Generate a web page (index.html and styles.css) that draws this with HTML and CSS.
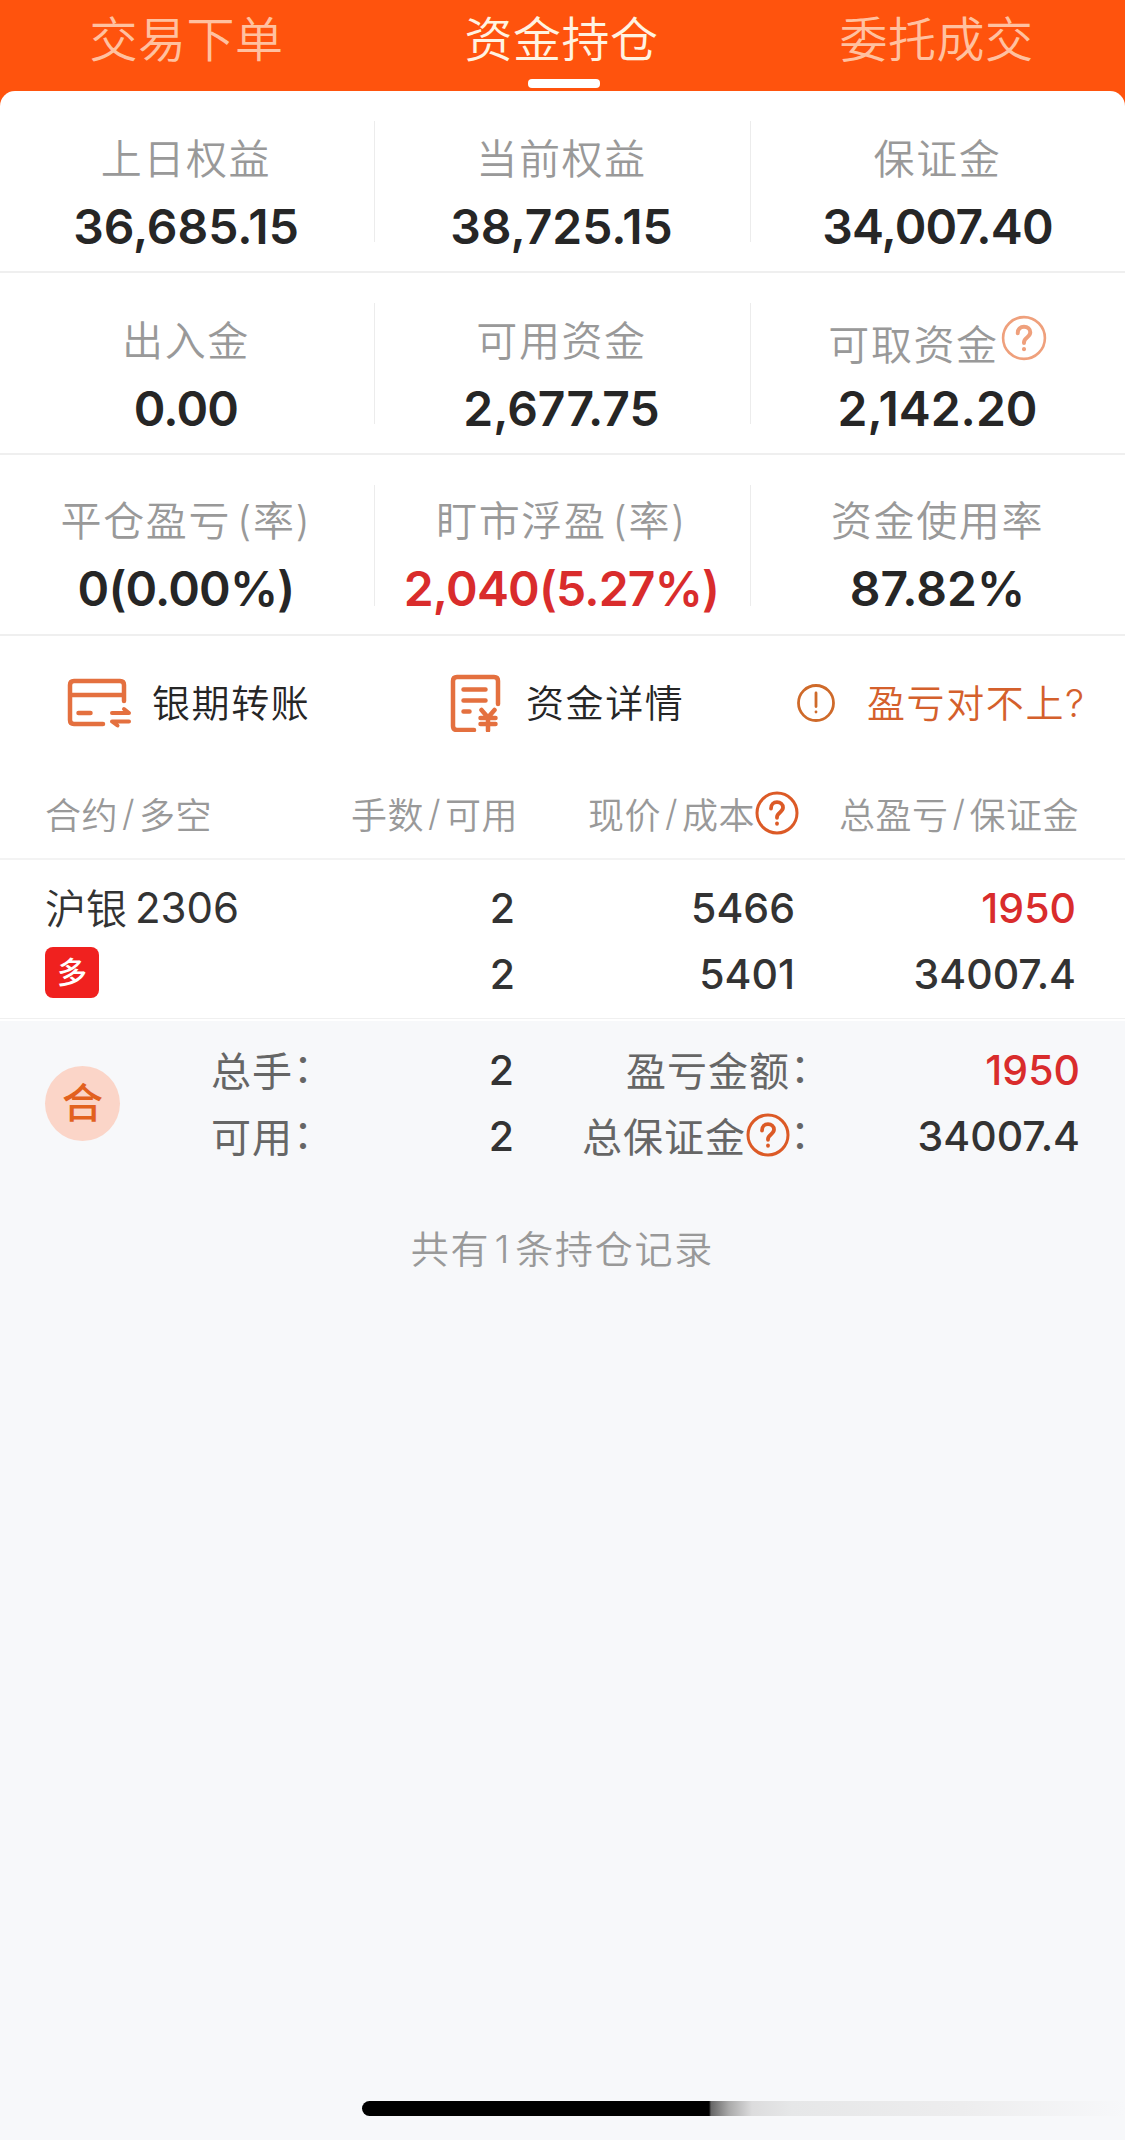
FILE: index.html
```html
<!DOCTYPE html>
<html lang="zh-CN">
<head>
<meta charset="UTF-8">
<meta name="viewport" content="width=device-width, initial-scale=1.0">
<link rel="stylesheet" href="styles.css">
<title>资金持仓</title>
</head>
<body>
<svg class="defs" width="0" height="0">
  <symbol id="help" viewBox="0 0 44 44">
    <circle cx="22" cy="22" r="20"/>
    <path class="mark" d="M16 17.500c0-4.200 2.600-6.300 6-6.300s6 2 6 5.400c0 4.800-6 4.900-6 9.400v.8"/>
    <path class="mark" d="M22 32.400v.4"/>
  </symbol>
</svg>

<div class="top">
  <div class="tabs">
    <div class="tab">交易下单</div>
    <div class="tab active">资金持仓</div>
    <div class="tab">委托成交</div>
  </div>
  <div class="funds">
    <div class="fund"><div class="label">上日权益</div><div class="value">36,685.15</div></div>
    <div class="fund"><div class="label">当前权益</div><div class="value">38,725.15</div></div>
    <div class="fund"><div class="label">保证金</div><div class="value tight">34,007.40</div></div>
    <div class="fund"><div class="label">出入金</div><div class="value tight">0.00</div></div>
    <div class="fund"><div class="label">可用资金</div><div class="value">2,677.75</div></div>
    <div class="fund"><div class="label low">可取资金<svg class="help pale"><use href="#help"/></svg></div><div class="value">2,142.20</div></div>
    <div class="fund"><div class="label">平仓盈亏<span class="paren">(率)</span></div><div class="value tight">0(0.00%)</div></div>
    <div class="fund"><div class="label">盯市浮盈<span class="paren">(率)</span></div><div class="value tight red">2,040(5.27%)</div></div>
    <div class="fund"><div class="label">资金使用率</div><div class="value">87.82%</div></div>
  </div>
</div>

<div class="actions">
  <div class="action transfer">
    <svg class="icon-card" viewBox="0 0 66 52">
      <path d="M58 24V8q0-4-4-4H8Q4 4 4 8v35q0 4 4 4h29M4 18h54M12.500 36h12"/>
      <path class="arrow" d="M46 36h17l-5-4M63 44.500H46l5.500 4"/>
    </svg>
    <span>银期转账</span>
  </div>
  <div class="action detail">
    <svg class="icon-bill" viewBox="0 0 52 58">
      <path d="M48 30V7q0-4-4-4H7Q3 3 3 7v45q0 4 4 4h17M13.500 15.500h22M13.500 26.500h22M13.500 37.500h6"/>
      <path d="M31.500 36l6.500 7.500 6.500-7.500M30.500 44h15M30.500 50h15M38 43.500v13"/>
    </svg>
    <span>资金详情</span>
  </div>
  <div class="action mismatch">
    <svg class="icon-warn" viewBox="0 0 40 40">
      <circle cx="20" cy="20" r="17.500"/>
      <path d="M20 10v13.500M20 28.800v.3"/>
    </svg>
    <span>盈亏对不上?</span>
  </div>
</div>

<div class="grid head">
  <div>合约<i>/</i>多空</div>
  <div>手数<i>/</i>可用</div>
  <div>现价<i>/</i>成本<svg class="help"><use href="#help"/></svg></div>
  <div>总盈亏<i>/</i>保证金</div>
</div>

<div class="grid position">
  <div class="name">沪银<span>2306</span></div>
  <div>2</div>
  <div>5466</div>
  <div class="red">1950</div>
  <div><span class="badge">多</span></div>
  <div>2</div>
  <div>5401</div>
  <div>34007.4</div>
</div>

<div class="summary">
  <div class="total">合</div>
  <div class="grid sum">
    <div class="key">总手<span>：</span></div>
    <div>2</div>
    <div class="key">盈亏金额<span>：</span></div>
    <div class="red">1950</div>
    <div class="key">可用<span>：</span></div>
    <div>2</div>
    <div class="key">总保证金<svg class="help"><use href="#help"/></svg><span>：</span></div>
    <div>34007.4</div>
  </div>
</div>

<div class="count">共有<span>1</span>条持仓记录</div>

<div class="home"></div>
</body>
</html>
```

FILE: styles.css
```css
* {
  box-sizing: border-box;
}
body {
  display: flex;
  flex-direction: column;
  height: 2140px;
  margin: 0;
  background: #f7f8fa;
  color: #262626;
  font-family: Inter, "Noto Sans CJK SC", sans-serif;
}
svg {
  fill: none;
  stroke: #e4703f;
  stroke-linecap: round;
  stroke-linejoin: round;
  flex: none;
}
.defs {
  position: absolute;
}
.top {
  background: #ff530d;
}
.tabs {
  display: grid;
  grid-template-columns: repeat(3, 1fr);
  height: 91px;
}
.tab {
  display: flex;
  flex-direction: column;
  align-items: center;
  padding-right: 2px;
  color: #ffc1a0;
  font-size: 48px;
  font-weight: 350;
  letter-spacing: 0.5px;
  line-height: 80px;
}
.tab.active {
  color: #fff3e2;
}
.tab.active::after {
  content: "";
  width: 72px;
  height: 9px;
  margin: -1px 0 0 4px;
  border-radius: 4px;
  background: #fff;
}

/* account figures */
.funds {
  display: grid;
  grid-template-columns: 375px 376px 374px;
  grid-template-rows: 182px 182px 181px;
  border-radius: 15px 15px 0 0;
  background: #fff;
}
.fund {
  display: flex;
  flex-direction: column;
  align-items: center;
  padding: 38px 3px 0 0;
  border-bottom: 2px solid #efefef;
  background: linear-gradient(#ececec, #ececec) right 30px / 1px 121px no-repeat;
}
.fund:nth-child(3n) {
  padding-right: 1px;
  background: none;
}
.fund:nth-child(n+7) {
  padding-top: 36px;
}
.label {
  display: flex;
  height: 60px;
  color: #999;
  font-size: 41px;
  font-weight: 350;
  letter-spacing: 1.6px;
  line-height: 60px;
  white-space: nowrap;
}
.label.low {
  padding-top: 4px;
}
.paren {
  margin-left: 6px;
}
.value {
  font-size: 48px;
  font-weight: 600;
  line-height: 76px;
}
.value.tight {
  letter-spacing: -0.8px;
}
.red {
  color: #d92c2c;
}
.help {
  width: 44px;
  height: 44px;
  stroke: #dc5a26;
  stroke-width: 3;
}
.mark {
  stroke-width: 3.8;
}
.help.pale {
  width: 46px;
  height: 46px;
  margin: 0 0 0 2px;
  stroke: #efa07c;
  stroke-width: 2.5;
}

/* shortcuts */
.actions {
  display: grid;
  grid-template-columns: 375px 376px 374px;
  height: 134px;
  background: #fff;
}
.action {
  display: flex;
  align-items: center;
  font-size: 38px;
  font-weight: 350;
  letter-spacing: 1.6px;
  white-space: nowrap;
}
.action span {
  margin-top: -5px;
}
.transfer {
  padding-left: 66px;
}
.detail {
  padding-left: 75px;
}
.mismatch {
  padding-left: 45px;
  color: #d4602c;
}
.icon-card {
  width: 66px;
  height: 52px;
  margin-right: 20px;
  stroke-width: 4.5;
}
.arrow {
  stroke-width: 4;
}
.icon-bill {
  width: 52px;
  height: 58px;
  margin-right: 24px;
  stroke-width: 4.5;
}
.icon-warn {
  width: 40px;
  height: 40px;
  margin-right: 31px;
  stroke: #cf6a2a;
  stroke-width: 2.8;
}

/* position list */
.grid {
  display: grid;
  grid-template-columns: 273px 200px 281px 280px;
  padding-left: 45px;
  white-space: nowrap;
}
.grid > div {
  display: flex;
  align-items: center;
  justify-content: flex-end;
}
.grid > div:nth-child(4n + 1) {
  justify-content: flex-start;
}
.head {
  height: 90px;
  padding-bottom: 2px;
  border-bottom: 2px solid #f3f3f3;
  background: #fff;
  color: #999;
  font-size: 36px;
  font-weight: 350;
  letter-spacing: 0.5px;
}
.head i {
  margin: 0 4px;
  font-style: normal;
}
.position {
  grid-template-columns: 270px 200px 280px 281px;
  grid-template-rows: 67px 66px;
  height: 159px;
  padding-top: 14px;
  border-bottom: 1px solid #f0f0f0;
  background: #fff;
  color: #333;
  font-size: 41px;
  font-weight: 500;
}
.position .name {
  padding-bottom: 3px;
  font-size: 41px;
  font-weight: 350;
}
.name span {
  margin: 2px 0 0 8px;
  font-size: 42px;
  font-weight: 400;
}
.badge {
  width: 54px;
  height: 51px;
  margin-top: -3px;
  border-radius: 8px;
  background: #f0211f;
  color: #fff;
  font-size: 30px;
  font-weight: 500;
  line-height: 50px;
  text-align: center;
}
.summary {
  display: flex;
  align-items: center;
  padding: 16px 0 0 45px;
  border-top: 2px solid #fff;
}
.total {
  width: 75px;
  height: 75px;
  border-radius: 50%;
  background: #fbd5c8;
  color: #e2611f;
  font-size: 41px;
  font-weight: 500;
  line-height: 74px;
  text-align: center;
}
.sum {
  grid-template-columns: 212px 91px 317px 249px;
  grid-template-rows: 66px 66px;
  padding-left: 91px;
  color: #333;
  font-size: 41px;
  font-weight: 500;
}
.sum .key {
  padding-bottom: 2px;
  color: #666;
  font-size: 40px;
  font-weight: 400;
  letter-spacing: 1px;
}
.key span {
  padding-bottom: 9px;
}
.count {
  margin-top: 52px;
  color: #999;
  font-size: 38px;
  font-weight: 350;
  letter-spacing: 1.8px;
  line-height: 56px;
  text-align: center;
}
.count span {
  margin: 0 4px;
}

/* home indicator fading out to the right */
.home {
  width: 763px;
  height: 15px;
  margin: auto 0 24px 362px;
  border-radius: 8px 0 0 8px;
  background: linear-gradient(90deg, #000 347px, #666 349px, #aaa 367px, #dcdcdd 390px, #e6e7e8 430px, #ededee 600px, #f7f8fa 763px);
}
```
